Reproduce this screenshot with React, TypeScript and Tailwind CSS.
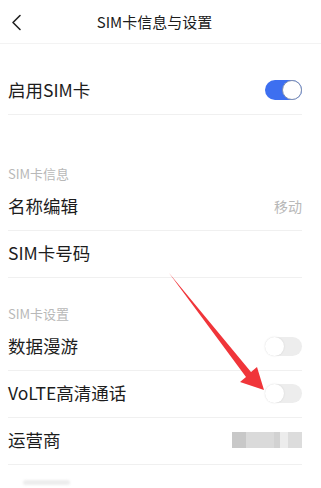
const font = { fontFamily: '"Noto Sans CJK SC", "Noto Sans", sans-serif' };

function Toggle({ on }: { on: boolean }) {
  if (on) {
    return (
      <div className="relative flex h-[20px] w-[37px] items-center justify-end rounded-full bg-[#3d6ff0]">
        <div className="h-[20px] w-[20px] rounded-full border border-[#7f8fb0] bg-white" />
      </div>
    );
  }
  return (
    <div className="flex h-[19px] w-[37px] items-center justify-start rounded-full bg-[#ededed]">
      <div className="h-[19px] w-[19px] rounded-full bg-white shadow-[0_0_2px_rgba(0,0,0,0.12)]" />
    </div>
  );
}

function Row({ label, right }: { label: string; right?: React.ReactNode }) {
  return (
    <div className="flex h-[47px] items-center justify-between border-b border-[#f0f0f0] pb-[2px]">
      <span className="text-[17.5px] leading-none text-[#1c1c1c]">{label}</span>
      {right}
    </div>
  );
}

function SectionTitle({ text, h }: { text: string; h: string }) {
  return (
    <div className={`flex items-end pb-[3px] ${h}`}>
      <span className="text-[13px] leading-[14px] text-[#b8b8b8]">{text}</span>
    </div>
  );
}

export default function App() {
  return (
    <div className="relative h-[488px] w-[321px] overflow-hidden bg-white" style={font}>
      <div className="relative flex h-[44px] items-center justify-center border-b border-[#f3f3f3]">
        <svg className="absolute left-[10px] top-[14px]" width="12" height="17" viewBox="0 0 12 17">
          <path d="M10 1.5 L3 8.5 L10 15.5" fill="none" stroke="#222" strokeWidth="1.6" strokeLinecap="round" strokeLinejoin="round" />
        </svg>
        <span className="ml-[-12px] text-[15px] leading-none text-[#1c1c1c]">SIM卡信息与设置</span>
      </div>

      <div className="ml-[8px] mr-[19px] pt-[24px]">
        <Row label="启用SIM卡" right={<Toggle on />} />

        <SectionTitle text="SIM卡信息" h="h-[69px]" />
        <Row label="名称编辑" right={<span className="text-[14px] leading-none text-[#b8b8b8]">移动</span>} />
        <Row label="SIM卡号码" />

        <SectionTitle text="SIM卡设置" h="h-[46px]" />
        <Row label="数据漫游" right={<Toggle on={false} />} />
        <Row label="VoLTE高清通话" right={<Toggle on={false} />} />
        <Row
          label="运营商"
          right={
            <div className="flex h-[16px] w-[70px] blur-[0.6px]">
              <div className="w-[14px] bg-[#c8c8c8]" />
              <div className="w-[28px] bg-[#dadada]" />
              <div className="w-[6px] bg-[#d2d2d2]" />
              <div className="w-[8px] bg-[#ececec]" />
              <div className="w-[14px] bg-[#dcdcdc]" />
            </div>
          }
        />

        <div className="ml-[15px] mt-[15px] h-[5px] w-[47px] rounded-sm bg-[#ededed] blur-[1px]" />
      </div>

      <svg className="absolute left-0 top-0" width="321" height="488" viewBox="0 0 321 488">
        <polygon
          points="169,273 251,372 257,367 264,390 240,382 246,377"
          fill="#f0353a"
        />
      </svg>
    </div>
  );
}
